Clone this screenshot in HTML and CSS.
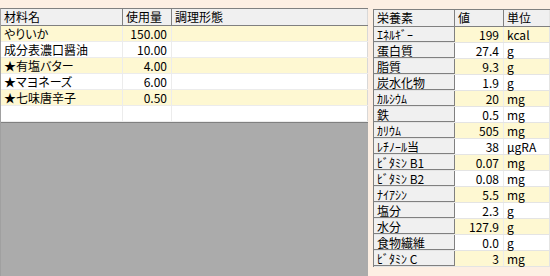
FILE: index.html
```html
<!DOCTYPE html>
<html lang="ja">
<head>
    <meta charset="UTF-8">
    <title>材料と栄養素</title>
    <link rel="stylesheet" href="styles.css">
</head>
<body>

    <!-- 材料グリッド -->
    <div class="leftPane">
        <div class="grid ingGrid">
            <div class="row head">
                <div class="cell">材料名</div>
                <div class="cell">使用量</div>
                <div class="cell">調理形態</div>
            </div>
            <div class="row odd">
                <div class="cell">やりいか</div>
                <div class="cell num">150.00</div>
                <div class="cell"></div>
            </div>
            <div class="row">
                <div class="cell">成分表濃口醤油</div>
                <div class="cell num">10.00</div>
                <div class="cell"></div>
            </div>
            <div class="row odd">
                <div class="cell">★有塩バター</div>
                <div class="cell num">4.00</div>
                <div class="cell"></div>
            </div>
            <div class="row">
                <div class="cell">★マヨネーズ</div>
                <div class="cell num">6.00</div>
                <div class="cell"></div>
            </div>
            <div class="row odd">
                <div class="cell">★七味唐辛子</div>
                <div class="cell num">0.50</div>
                <div class="cell"></div>
            </div>
            <div class="row">
                <div class="cell"></div>
                <div class="cell num"></div>
                <div class="cell"></div>
            </div>
        </div>
    </div>

    <!-- 栄養素グリッド -->
    <div class="rightPane">
        <div class="grid nutGrid">
            <div class="row head">
                <div class="cell">栄養素</div>
                <div class="cell">値</div>
                <div class="cell">単位</div>
            </div>
            <div class="row odd"><div class="cell name">ｴﾈﾙｷﾞｰ</div><div class="cell num">199</div><div class="cell">kcal</div></div>
            <div class="row"><div class="cell name">蛋白質</div><div class="cell num">27.4</div><div class="cell">g</div></div>
            <div class="row odd"><div class="cell name">脂質</div><div class="cell num">9.3</div><div class="cell">g</div></div>
            <div class="row"><div class="cell name">炭水化物</div><div class="cell num">1.9</div><div class="cell">g</div></div>
            <div class="row odd"><div class="cell name">ｶﾙｼｳﾑ</div><div class="cell num">20</div><div class="cell">mg</div></div>
            <div class="row"><div class="cell name">鉄</div><div class="cell num">0.5</div><div class="cell">mg</div></div>
            <div class="row odd"><div class="cell name">ｶﾘｳﾑ</div><div class="cell num">505</div><div class="cell">mg</div></div>
            <div class="row"><div class="cell name">ﾚﾁﾉｰﾙ当</div><div class="cell num">38</div><div class="cell">μgRA</div></div>
            <div class="row odd"><div class="cell name">ﾋﾞﾀﾐﾝ B1</div><div class="cell num">0.07</div><div class="cell">mg</div></div>
            <div class="row"><div class="cell name">ﾋﾞﾀﾐﾝ B2</div><div class="cell num">0.08</div><div class="cell">mg</div></div>
            <div class="row odd"><div class="cell name">ﾅｲｱｼﾝ</div><div class="cell num">5.5</div><div class="cell">mg</div></div>
            <div class="row"><div class="cell name">塩分</div><div class="cell num">2.3</div><div class="cell">g</div></div>
            <div class="row odd"><div class="cell name">水分</div><div class="cell num">127.9</div><div class="cell">g</div></div>
            <div class="row"><div class="cell name">食物繊維</div><div class="cell num">0.0</div><div class="cell">g</div></div>
            <div class="row odd"><div class="cell name">ﾋﾞﾀﾐﾝ C</div><div class="cell num">3</div><div class="cell">mg</div></div>
        </div>
    </div>

</body>
</html>
```

FILE: styles.css
```css
body {
    margin: 0;
    height: 276px;
    overflow: hidden;
    background-color: #fdefe3;
    font-family: "Noto Sans CJK JP", sans-serif;
    font-size: 12px;
    color: #000;
    display: flex;
}
.leftPane {
    width: 368px;
    margin-top: 8px;
    background-color: #ababab;
    border-top: 1px solid #808080;
    border-left: 1px solid #a0a0a0;
    box-sizing: border-box;
}
.rightPane {
    flex: 1;
    margin-left: 5px;
    margin-top: 9px;
}
.grid {
    background-color: #fff;
}
.ingGrid {
    border-bottom: 1px solid #808080;
    font-feature-settings: "palt";
}
.nutGrid {
    border-left: 1px solid #808080;
    border-top: 1px solid #808080;
}
.row {
    display: grid;
    height: 16px;
    box-sizing: border-box;
    border-bottom: 1px solid #ececec;
}
.ingGrid .row {
    grid-template-columns: 122px 49px 1fr;
}
.nutGrid .row {
    grid-template-columns: 81px 49px 1fr;
}
.cell {
    padding: 0 3px;
    height: 15px;
    line-height: 15px;
    white-space: nowrap;
    border-right: 1px solid #ececec;
}
.num {
    text-align: right;
    padding-right: 4px;
}
.odd .cell {
    background-color: #fef8d2;
}
.head {
    height: 17px;
    border-bottom: 1px solid #808080;
}
.head .cell {
    height: 16px;
    background-color: #f0f0f0;
    line-height: 16px;
    border-right: 1px solid #808080;
}
.head .cell:last-child {
    border-right: 1px solid #a0a0a0;
}
.nutGrid .name,
.odd .name {
    background-color: #f0f0f0;
    border-right: 1px solid #808080;
}
.nutGrid .row:not(.head) .name {
    box-shadow: inset 0 -1px 0 #808080;
}
.nutGrid .row:not(.head) {
    border-bottom-color: #e4e4e4;
}
.nutGrid .row .cell:last-child {
    border-right: 1px solid #e4e4e4;
}
.ingGrid .row .cell:last-child {
    border-right: 1px solid #d8d8d8;
}
```
